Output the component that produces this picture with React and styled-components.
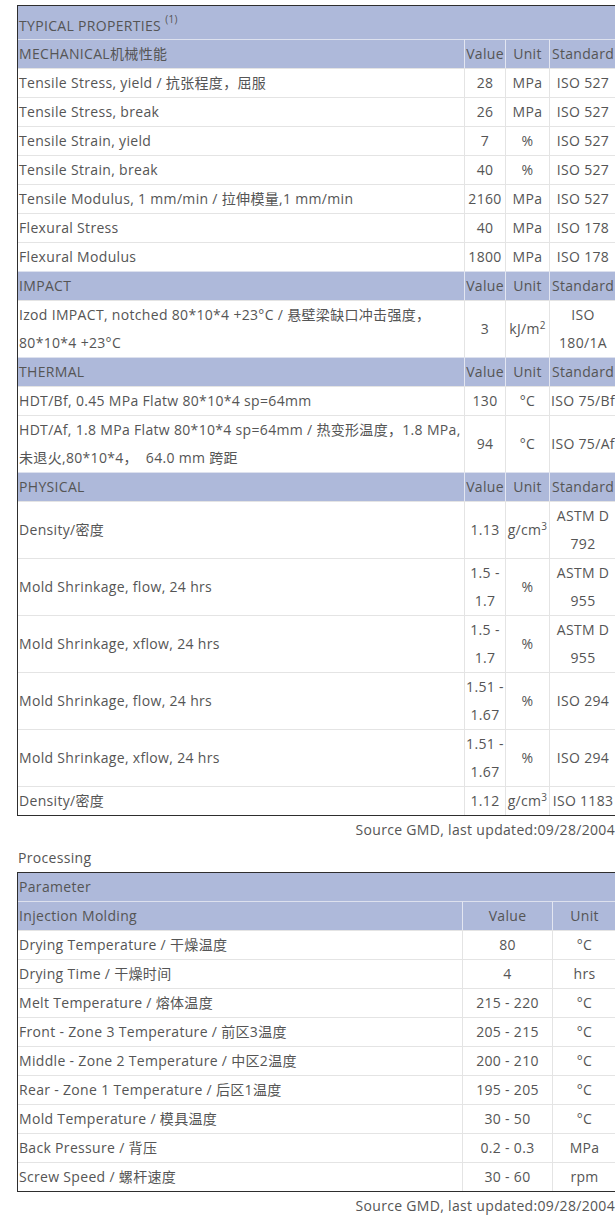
import React from "react";
import styled, { createGlobalStyle } from "styled-components";

const Global = createGlobalStyle`
  html, body { margin: 0; padding: 0; background: #fff; }
  body {
    font-family: "Open Sans", "Noto Sans CJK SC", sans-serif;
    font-size: 14px;
    letter-spacing: 0.32px;
    color: #555;
  }
`;

const Page = styled.div`
  width: 598px;
  padding: 5px 0 0 17px;
`;

const Table = styled.table`
  width: 598px;
  table-layout: fixed;
  border-collapse: separate;
  border-spacing: 0;
  border: 1px solid #2e2e2e;
  box-sizing: border-box;
`;

const Col = styled.col`
  width: ${(p) => p.$w}px;
`;

const Row = styled.tr``;

const Cell = styled.td`
  box-sizing: border-box;
  padding: ${(p) => (p.$top ? "6px 1px 0" : "0 1px")};
  line-height: ${(p) => (p.$top ? "27px" : "28px")};
  height: ${(p) => (p.$top ? "33px" : "auto")};
  text-align: ${(p) => (p.$center ? "center" : "left")};
  vertical-align: middle;
  white-space: pre;
  background: ${(p) => (p.$head ? "#aeb9da" : "#fff")};
  color: #555;
  tr + tr > & {
    border-top: 1px solid ${(p) => (p.$head ? "#dde1ee" : "#e4e4e4")};
  }
  td + & {
    border-left: 1px solid ${(p) => (p.$head ? "#e3e6f1" : "#e4e4e4")};
  }
`;

const Sup = styled.sup`
  font-size: 10px;
  line-height: 0;
  vertical-align: 8px;
  margin-left: 4px;
`;

const Small = styled.span`
  font-size: 10px;
  vertical-align: 5px;
  line-height: 0;
`;

const Note = styled.div`
  line-height: 28px;
  text-align: right;
  color: #555;
`;

const Label = styled.div`
  line-height: 28px;
  padding-left: 1px;
  color: #555;
`;

const props = [
  {
    title: "MECHANICAL机械性能",
    rows: [
      ["Tensile Stress, yield / 抗张程度，屈服", "28", "MPa", "ISO 527"],
      ["Tensile Stress, break", "26", "MPa", "ISO 527"],
      ["Tensile Strain, yield", "7", "%", "ISO 527"],
      ["Tensile Strain, break", "40", "%", "ISO 527"],
      ["Tensile Modulus, 1 mm/min / 拉伸模量,1 mm/min", "2160", "MPa", "ISO 527"],
      ["Flexural Stress", "40", "MPa", "ISO 178"],
      ["Flexural Modulus", "1800", "MPa", "ISO 178"],
    ],
  },
  {
    title: "IMPACT",
    rows: [
      [
        "Izod IMPACT, notched 80*10*4 +23°C / 悬壁梁缺口冲击强度，\n80*10*4 +23°C",
        "3",
        "kJ/m²",
        "ISO\n180/1A",
      ],
    ],
  },
  {
    title: "THERMAL",
    rows: [
      ["HDT/Bf, 0.45 MPa Flatw 80*10*4 sp=64mm", "130", "°C", "ISO 75/Bf"],
      [
        "HDT/Af, 1.8 MPa Flatw 80*10*4 sp=64mm / 热变形温度，1.8 MPa,\n未退火,80*10*4，  64.0 mm 跨距",
        "94",
        "°C",
        "ISO 75/Af",
      ],
    ],
  },
  {
    title: "PHYSICAL",
    rows: [
      ["Density/密度", "1.13", "g/cm3", "ASTM D\n792"],
      ["Mold Shrinkage, flow, 24 hrs", "1.5 -\n1.7", "%", "ASTM D\n955"],
      ["Mold Shrinkage, xflow, 24 hrs", "1.5 -\n1.7", "%", "ASTM D\n955"],
      ["Mold Shrinkage, flow, 24 hrs", "1.51 -\n1.67", "%", "ISO 294"],
      ["Mold Shrinkage, xflow, 24 hrs", "1.51 -\n1.67", "%", "ISO 294"],
      ["Density/密度", "1.12", "g/cm3", "ISO 1183"],
    ],
  },
];

const processing = [
  ["Drying Temperature / 干燥温度", "80", "°C"],
  ["Drying Time / 干燥时间", "4", "hrs"],
  ["Melt Temperature / 熔体温度", "215 - 220", "°C"],
  ["Front - Zone 3 Temperature / 前区3温度", "205 - 215", "°C"],
  ["Middle - Zone 2 Temperature / 中区2温度", "200 - 210", "°C"],
  ["Rear - Zone 1 Temperature / 后区1温度", "195 - 205", "°C"],
  ["Mold Temperature / 模具温度", "30 - 50", "°C"],
  ["Back Pressure / 背压", "0.2 - 0.3", "MPa"],
  ["Screw Speed / 螺杆速度", "30 - 60", "rpm"],
];

function Unit({ u }) {
  if (u === "g/cm3") {
    return (
      <>
        g/cm<Small>3</Small>
      </>
    );
  }
  if (u === "kJ/m²") {
    return (
      <>
        kJ/m<Small>2</Small>
      </>
    );
  }
  return u;
}

export default function App() {
  return (
    <Page>
      <Global />
      <Table>
        <colgroup>
          <Col $w={446} />
          <Col $w={41} />
          <Col $w={44} />
          <Col $w={67} />
        </colgroup>
        <tbody>
          <Row>
            <Cell $head $top colSpan={4}>
              TYPICAL PROPERTIES<Sup>(1)</Sup>
            </Cell>
          </Row>
          {props.map((sec) => (
            <React.Fragment key={sec.title}>
              <Row>
                <Cell $head>{sec.title}</Cell>
                <Cell $head $center>Value</Cell>
                <Cell $head $center>Unit</Cell>
                <Cell $head $center>Standard</Cell>
              </Row>
              {sec.rows.map((r, i) => (
                <Row key={i}>
                  <Cell>{r[0]}</Cell>
                  <Cell $center>{r[1]}</Cell>
                  <Cell $center>
                    <Unit u={r[2]} />
                  </Cell>
                  <Cell $center>{r[3]}</Cell>
                </Row>
              ))}
            </React.Fragment>
          ))}
        </tbody>
      </Table>
      <Note>Source GMD, last updated:09/28/2004</Note>
      <Label>Processing</Label>
      <Table>
        <colgroup>
          <Col $w={444} />
          <Col $w={90} />
          <Col $w={64} />
        </colgroup>
        <tbody>
          <Row>
            <Cell $head colSpan={3}>Parameter</Cell>
          </Row>
          <Row>
            <Cell $head>Injection Molding</Cell>
            <Cell $head $center>Value</Cell>
            <Cell $head $center>Unit</Cell>
          </Row>
          {processing.map((r, i) => (
            <Row key={i}>
              <Cell>{r[0]}</Cell>
              <Cell $center>{r[1]}</Cell>
              <Cell $center>{r[2]}</Cell>
            </Row>
          ))}
        </tbody>
      </Table>
      <Note>Source GMD, last updated:09/28/2004</Note>
    </Page>
  );
}
